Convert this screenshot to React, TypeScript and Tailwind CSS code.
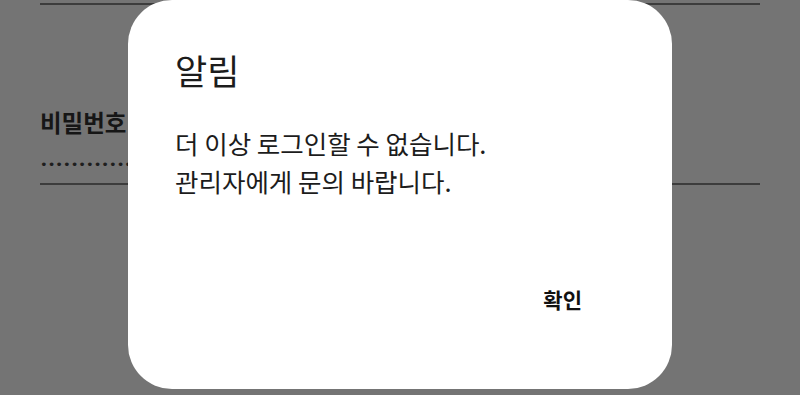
import React from 'react';

const font = { fontFamily: '"Noto Sans CJK KR", "Noto Sans", sans-serif' };

export default function App() {
  return (
    <div className="relative h-[395px] w-[800px] overflow-hidden bg-[#747474]" style={font}>
      {/* dimmed login form behind the dialog */}
      <div className="px-[40px]">
        <div className="h-[5px] border-b-2 border-[#3c3c3c]" />
        <div className="pt-[103px] text-[23.5px] font-bold leading-[28px] text-[#161616]">비밀번호</div>
        <div
          className="mt-[17px] h-[24px] text-[13px] leading-[24px] text-[#1e1e1e]"
          style={{ fontFamily: '"DejaVu Sans", sans-serif' }}
        >
          ••••••••••••••••
        </div>
        <div className="mt-[6px] border-b-2 border-[#3c3c3c]" />
      </div>

      {/* alert dialog */}
      <div className="absolute inset-x-0 top-0 flex justify-center">
        <div className="flex h-[389px] w-[544px] flex-col rounded-[44px] bg-white pl-[47px] pr-[90px]">
          <h1 className="pt-[46px] text-[35px] font-normal leading-[48px] text-[#1c1c1c]">알림</h1>
          <div className="mt-[30px] text-[25.5px] leading-[38px] text-[#1c1c1c]">
            <p>더 이상 로그인할 수 없습니다.</p>
            <p>관리자에게 문의 바랍니다.</p>
          </div>
          <div className="mt-[85px] flex justify-end">
            <button className="text-[21px] font-bold leading-[28px] text-[#111]">확인</button>
          </div>
        </div>
      </div>
    </div>
  );
}
